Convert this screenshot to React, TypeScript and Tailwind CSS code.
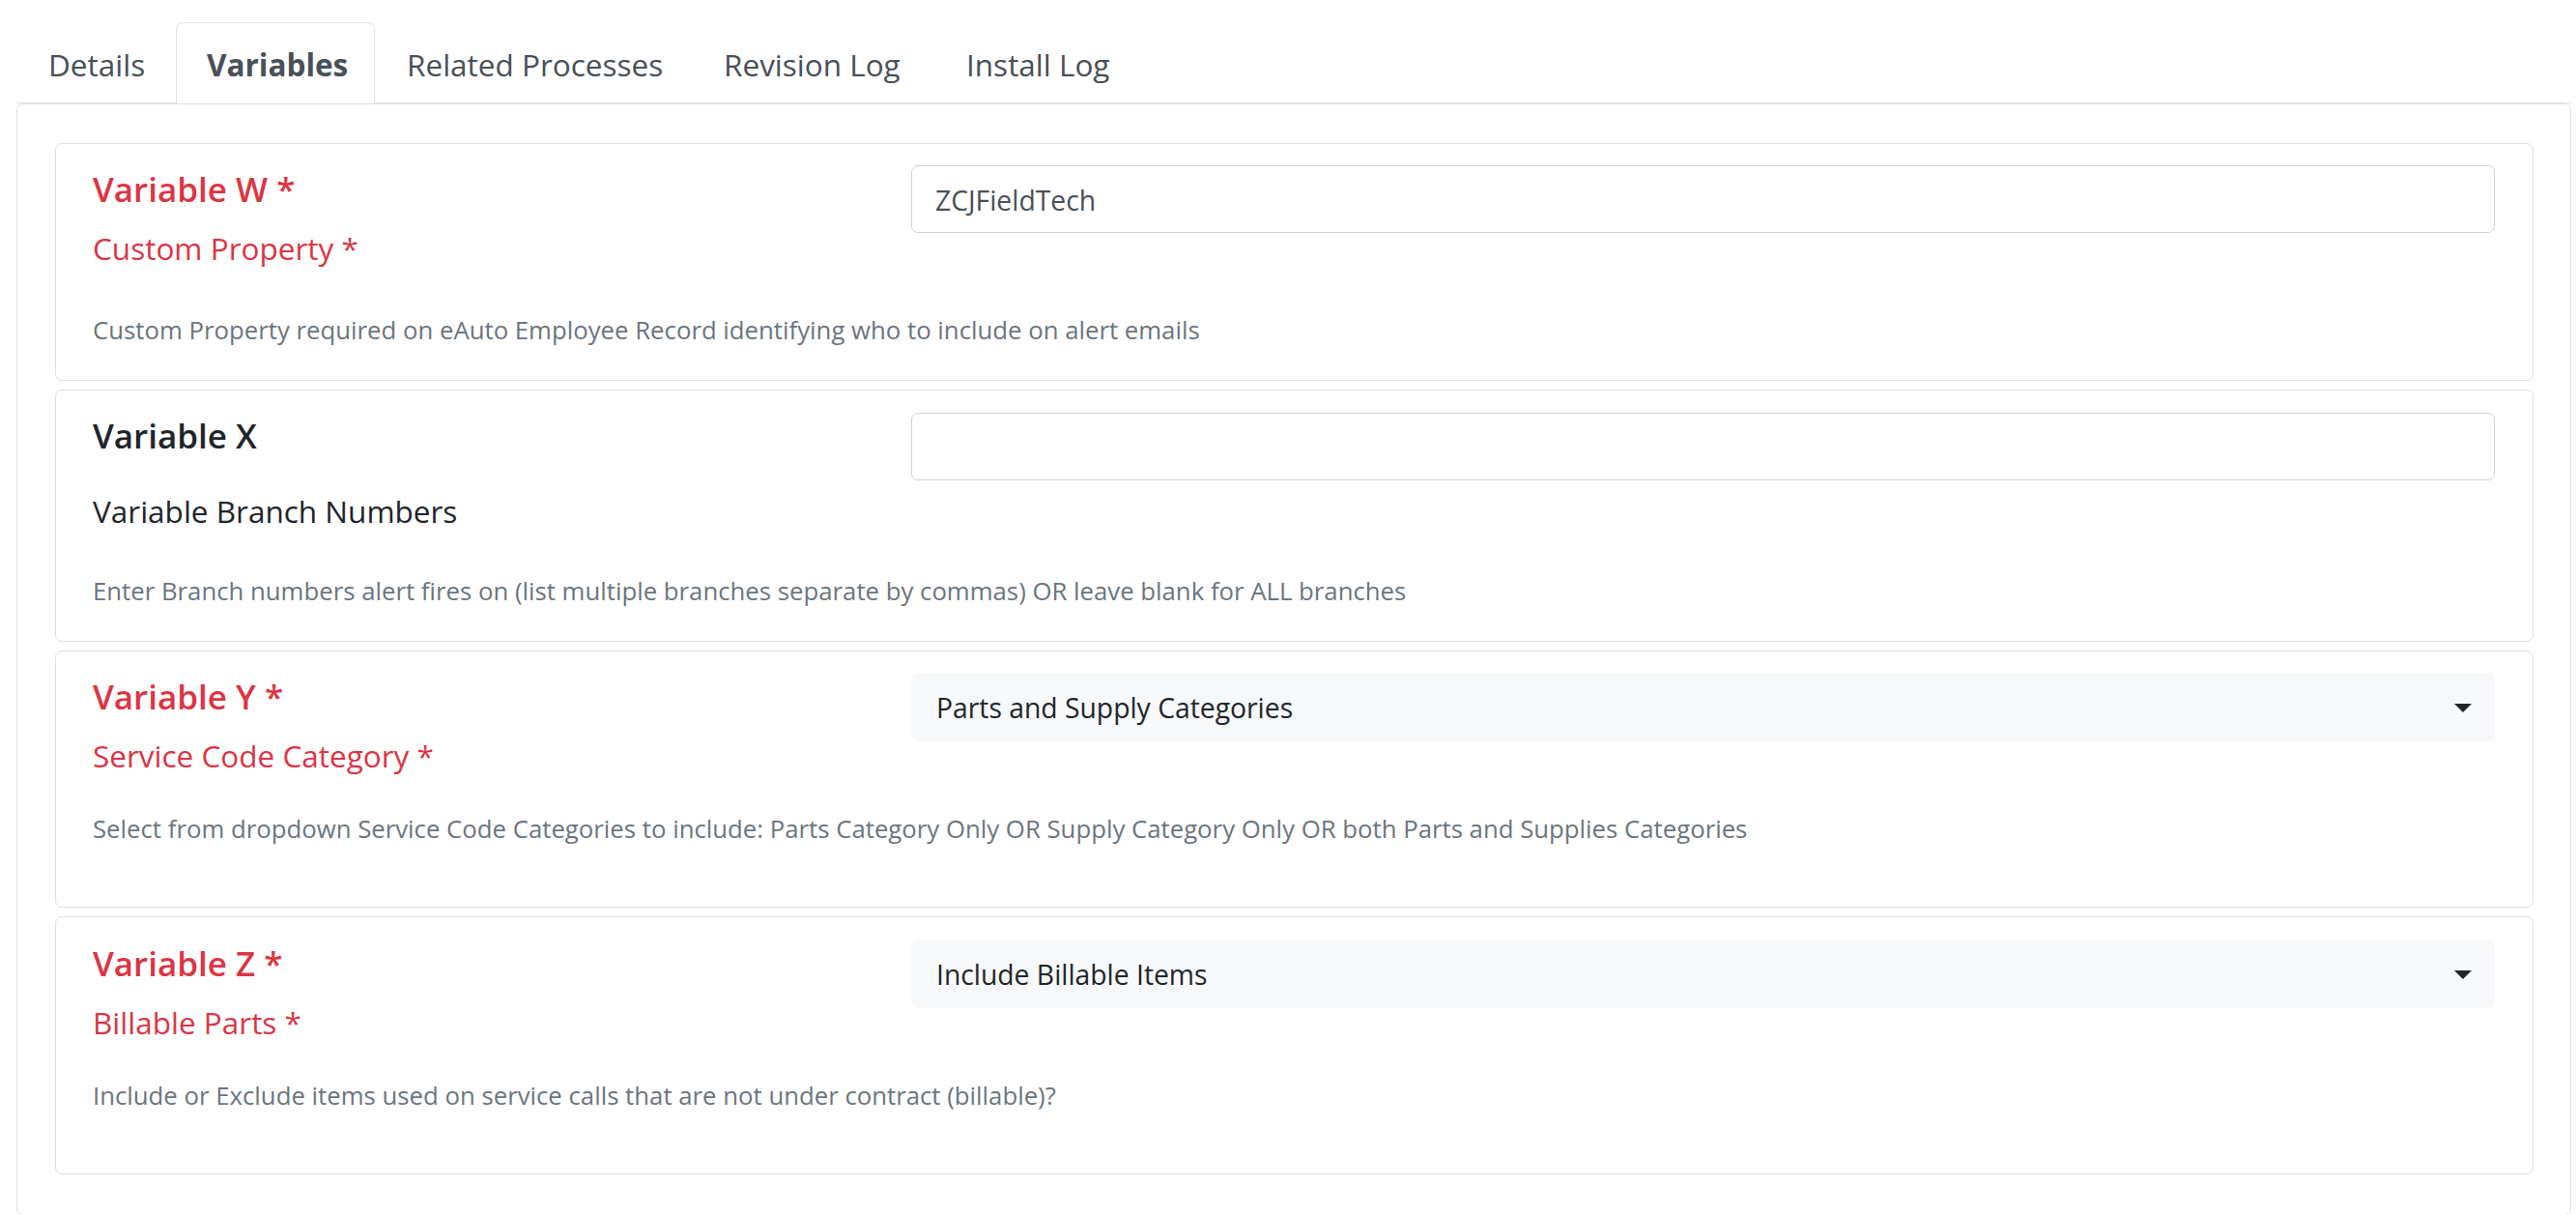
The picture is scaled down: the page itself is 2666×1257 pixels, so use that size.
import React from "react";

const FONT = { fontFamily: '"Open Sans", "Noto Sans", sans-serif' };

function Tabs() {
  return (
    <div className="ml-[17px] mr-[5px] flex border-b border-[#dee2e6]">
      <div className="h-[84px] mb-[-1px] w-[165px] pl-[33px] pt-[4px] leading-[80px] text-[31.5px] text-[#495057]">Details</div>
      <div className="h-[84px] mb-[-1px] w-[206px] pl-[31px] pt-[3px] leading-[80px] text-[31.5px] font-bold text-[#495057] bg-white border border-b-0 border-[#dee2e6] rounded-t-[7px]">Variables</div>
      <div className="h-[84px] mb-[-1px] w-[330px] pl-[33px] pt-[4px] leading-[80px] text-[31.5px] text-[#495057]">Related Processes</div>
      <div className="h-[84px] mb-[-1px] w-[250px] pl-[31px] pt-[4px] leading-[80px] text-[31.5px] text-[#495057]">Revision Log</div>
      <div className="h-[84px] mb-[-1px] w-[215px] pl-[32px] pt-[4px] leading-[80px] text-[31.5px] text-[#495057]">Install Log</div>
    </div>
  );
}

function Arrow() {
  return (
    <svg width="18" height="9" viewBox="0 0 18 9" className="shrink-0">
      <path d="M0 0 H18 L9 9 Z" fill="#212529" />
    </svg>
  );
}

export default function App() {
  return (
    <div className="w-full bg-white pt-[23px]" style={FONT}>
      <Tabs />
      <div className="ml-[17px] mr-[5px] border border-[#dee2e6] rounded-[7px] pt-[40px] pl-[39px] pr-[38px] pb-[42px] flex flex-col gap-[9px]">
        {/* Card W */}
        <div className="border border-[#dfdfdf] rounded-[7px] pl-[38px] pr-[39px] pt-[22px] pb-[34px]">
          <div className="grid grid-cols-[847px_1fr]">
            <div className="flex flex-col">
              <div className="text-[35px] leading-[49px] font-semibold text-[#dc3545]">Variable W *</div>
              <div className="mt-[18px] text-[31.5px] leading-[38px] text-[#dc3545]">Custom Property *</div>
            </div>
            <div>
              <div className="h-[70px] border border-[#ced4da] rounded-[7px] bg-white pl-[24px] pt-[2px] flex items-center text-[28.3px] text-[#495057]">ZCJFieldTech</div>
            </div>
          </div>
          <div className="mt-[47px] text-[25.75px] leading-[36px] text-[#6c757d]">
            Custom Property required on eAuto Employee Record identifying who to include on alert emails
          </div>
        </div>

        {/* Card X */}
        <div className="border border-[#dfdfdf] rounded-[7px] pl-[38px] pr-[39px] pt-[22px] pb-[34px]">
          <div className="grid grid-cols-[847px_1fr]">
            <div className="flex flex-col">
              <div className="text-[35px] leading-[49px] font-semibold text-[#212529]">Variable X</div>
              <div className="mt-[35px] text-[31.5px] leading-[38px] text-[#212529]">Variable Branch Numbers</div>
            </div>
            <div className="pt-[1px]">
              <div className="h-[70px] border border-[#ced4da] rounded-[7px] bg-white"></div>
            </div>
          </div>
          <div className="mt-[45px] text-[25.75px] leading-[36px] text-[#6c757d]">
            Enter Branch numbers alert fires on (list multiple branches separate by commas) OR leave blank for ALL branches
          </div>
        </div>

        {/* Card Y */}
        <div className="border border-[#dfdfdf] rounded-[7px] pl-[38px] pr-[39px] pt-[22px] pb-[63px]">
          <div className="grid grid-cols-[847px_1fr]">
            <div className="flex flex-col">
              <div className="text-[35px] leading-[49px] font-semibold text-[#dc3545]">Variable Y *</div>
              <div className="mt-[18px] text-[31.5px] leading-[38px] text-[#dc3545]">Service Code Category *</div>
            </div>
            <div>
              <div className="h-[71px] rounded-[7px] bg-[#f7f8fa] pl-[26px] pr-[24px] pt-[1px] flex items-center justify-between text-[28.3px] text-[#212529]">
                <span>Parts and Supply Categories</span>
                <Arrow />
              </div>
            </div>
          </div>
          <div className="mt-[38px] text-[25.75px] leading-[36px] text-[#6c757d]">
            Select from dropdown Service Code Categories to include: Parts Category Only OR Supply Category Only OR both Parts and Supplies Categories
          </div>
        </div>

        {/* Card Z */}
        <div className="border border-[#dfdfdf] rounded-[7px] pl-[38px] pr-[39px] pt-[23px] pb-[63px]">
          <div className="grid grid-cols-[847px_1fr]">
            <div className="flex flex-col">
              <div className="text-[35px] leading-[49px] font-semibold text-[#dc3545]">Variable Z *</div>
              <div className="mt-[18px] text-[31.5px] leading-[38px] text-[#dc3545]">Billable Parts *</div>
            </div>
            <div>
              <div className="h-[71px] rounded-[7px] bg-[#f7f8fa] pl-[26px] pr-[24px] pt-[1px] flex items-center justify-between text-[28.3px] text-[#212529]">
                <span>Include Billable Items</span>
                <Arrow />
              </div>
            </div>
          </div>
          <div className="mt-[38px] text-[25.75px] leading-[36px] text-[#6c757d]">
            Include or Exclude items used on service calls that are not under contract (billable)?
          </div>
        </div>
      </div>
    </div>
  );
}
